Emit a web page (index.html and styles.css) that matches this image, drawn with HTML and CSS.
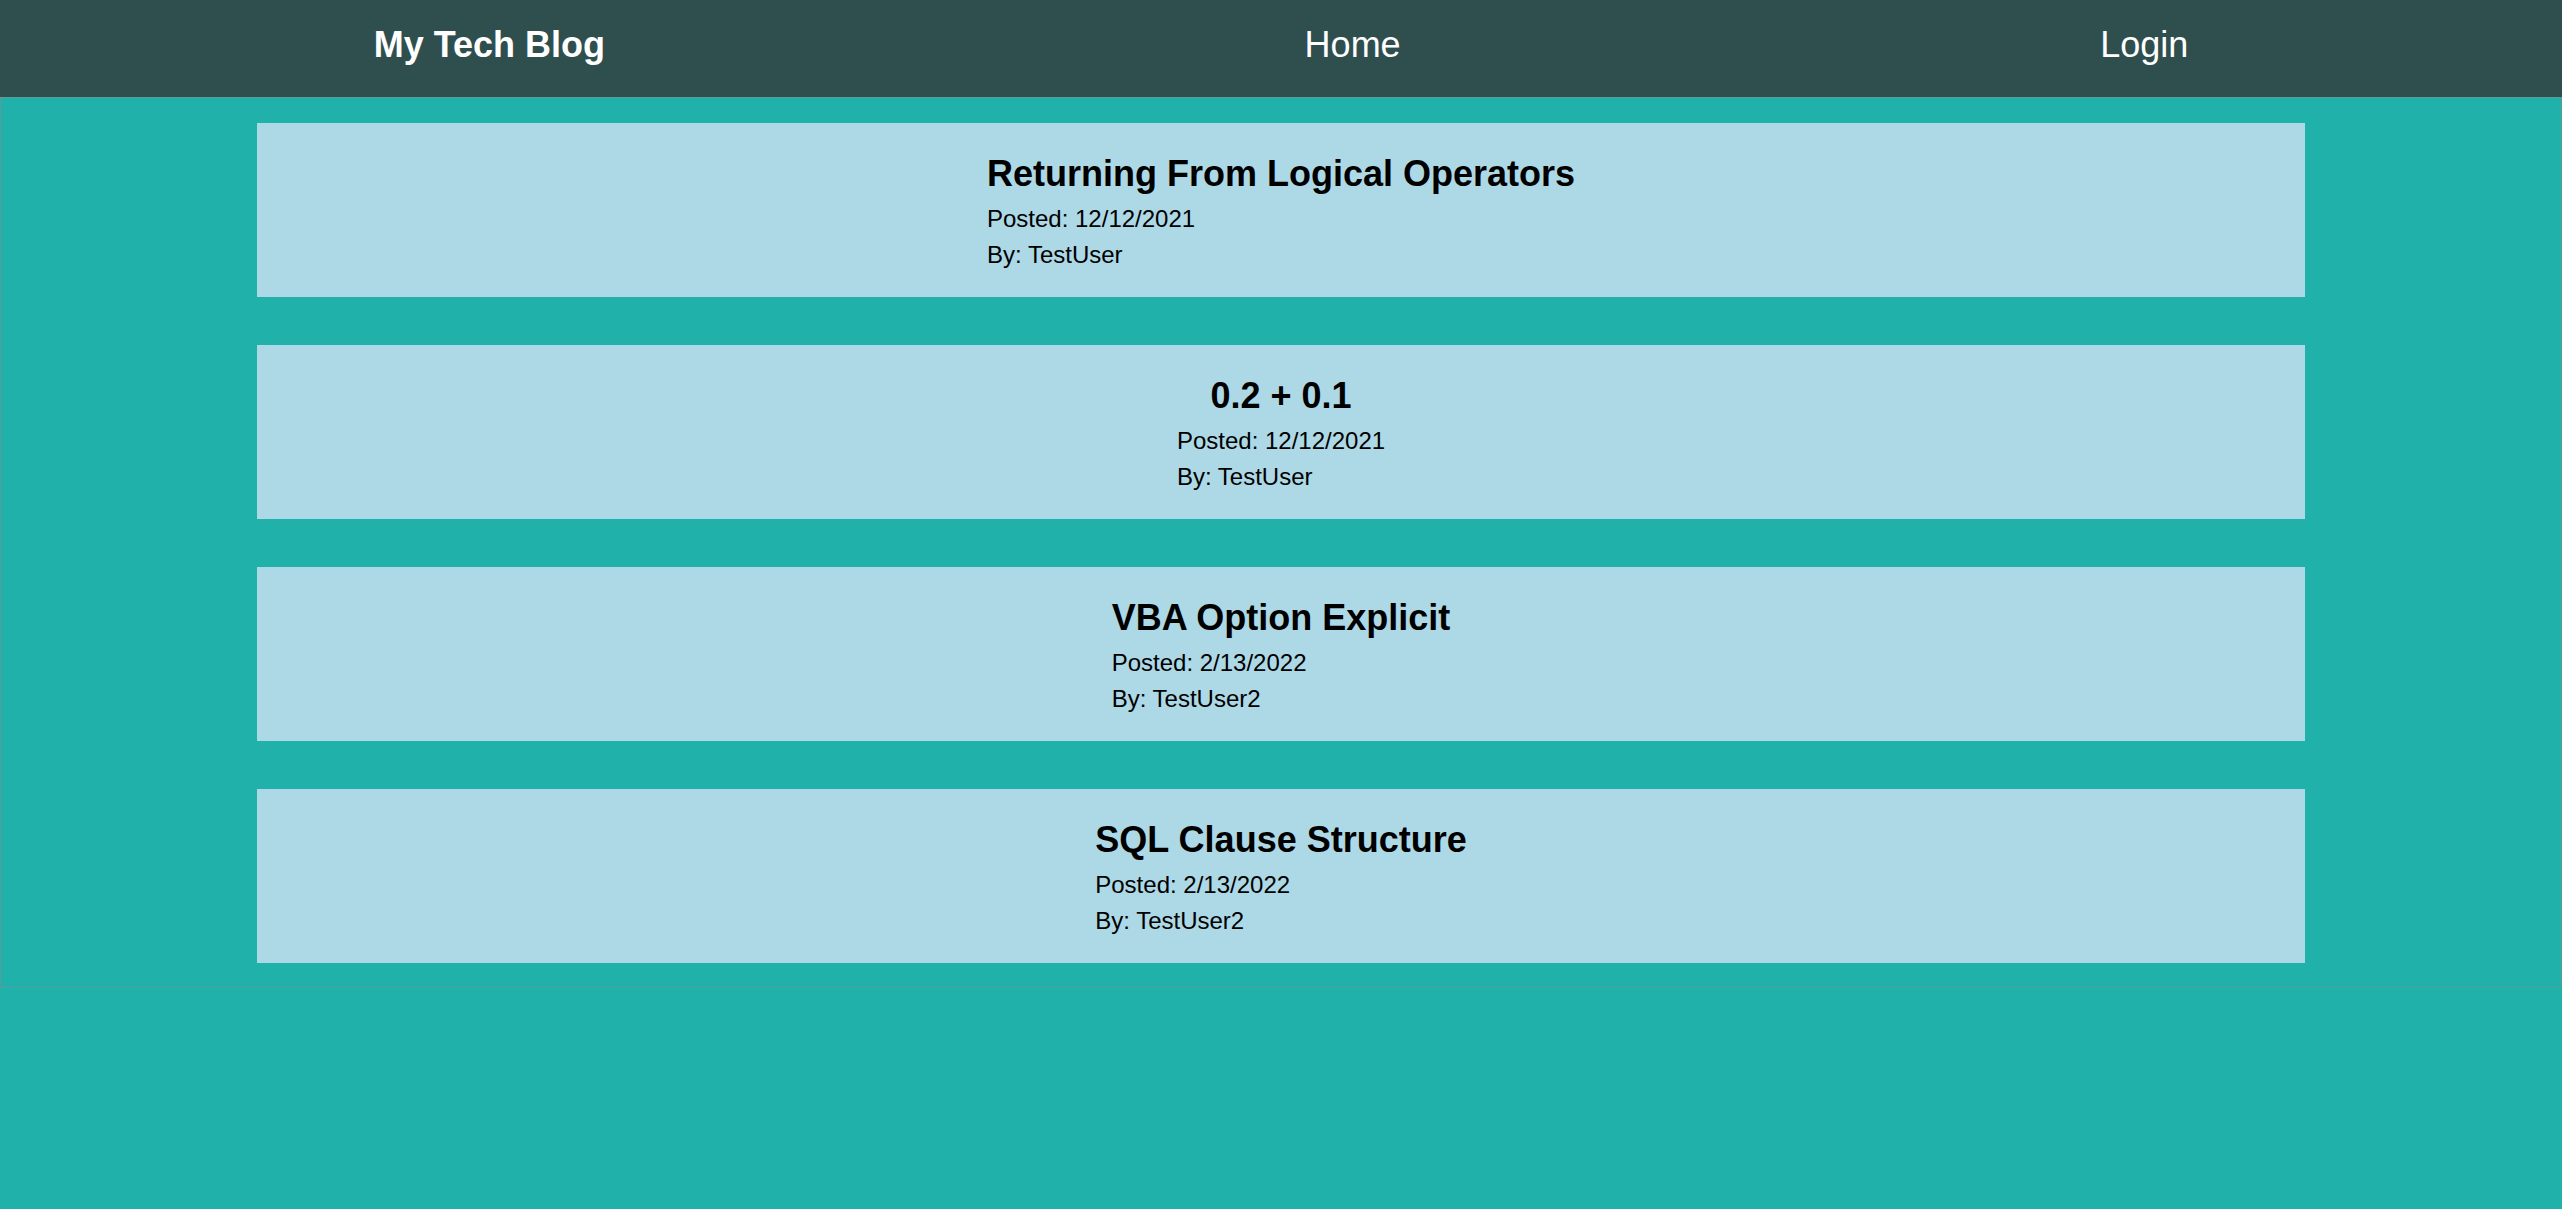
FILE: index.html
```html
<!DOCTYPE html>
<html lang="en">
<head>
<meta charset="utf-8">
<title>My Tech Blog</title>
<link rel="stylesheet" href="styles.css">
</head>
<body>
<header class="site-header">
  <a class="brand" href="#">My Tech Blog</a>
  <a class="nav-link" href="#">Home</a>
  <a class="nav-link" href="#">Login</a>
</header>
<main class="posts">
  <article class="post">
    <div class="post-inner">
      <h2 class="post-title">Returning From Logical Operators</h2>
      <p class="post-meta">Posted: 12/12/2021</p>
      <p class="post-meta">By: TestUser</p>
    </div>
  </article>
  <article class="post">
    <div class="post-inner">
      <h2 class="post-title">0.2 + 0.1</h2>
      <p class="post-meta">Posted: 12/12/2021</p>
      <p class="post-meta">By: TestUser</p>
    </div>
  </article>
  <article class="post">
    <div class="post-inner">
      <h2 class="post-title">VBA Option Explicit</h2>
      <p class="post-meta">Posted: 2/13/2022</p>
      <p class="post-meta">By: TestUser2</p>
    </div>
  </article>
  <article class="post">
    <div class="post-inner">
      <h2 class="post-title">SQL Clause Structure</h2>
      <p class="post-meta">Posted: 2/13/2022</p>
      <p class="post-meta">By: TestUser2</p>
    </div>
  </article>
</main>
</body>
</html>
```
FILE: styles.css
```css
html, body {
  margin: 0;
  padding: 0;
}

body {
  background: #20b2aa;
  font-family: "Liberation Sans", Arial, sans-serif;
  color: #000;
  min-height: 100vh;
}

.site-header {
  box-sizing: border-box;
  height: 97px;
  padding: 24px 24px 0;
  background: #2f4f4f;
  display: flex;
  justify-content: space-around;
  align-items: flex-start;
}

.brand,
.nav-link {
  color: #fff;
  text-decoration: none;
  font-size: 36px;
  line-height: normal;
}

.brand {
  font-weight: bold;
}

.posts {
  border: 1px dotted #8a8a8a;
  padding: 25px 0 24px;
  display: flex;
  flex-direction: column;
  gap: 48px;
}

.post {
  width: 80%;
  margin: 0 auto;
  background: #add8e6;
  box-sizing: border-box;
  padding: 30px 0 24px;
}

.post-inner {
  width: fit-content;
  margin: 0 auto;
}

.post-title {
  margin: 0 0 7px;
  font-size: 36px;
  line-height: 41px;
  font-weight: bold;
  text-align: center;
}

.post-meta {
  margin: 0;
  font-size: 24px;
  line-height: 36px;
}
```
